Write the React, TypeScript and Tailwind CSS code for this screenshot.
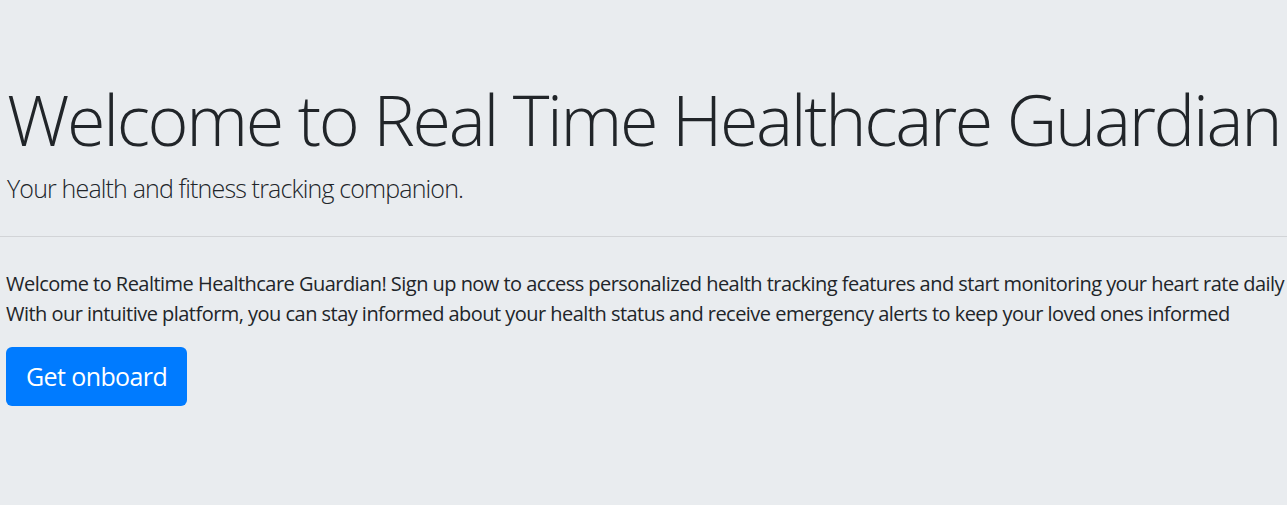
export default function App() {
  return (
    <div className="min-h-[505px] w-full bg-[#e9ecef] text-[#212529] overflow-hidden">
      <div className="pl-[7px] pt-[77px] font-['Open_Sans','Noto_Sans',sans-serif]">
        <h1 className="text-[70px] font-light leading-[84px] tracking-[-2.35px] whitespace-nowrap">Welcome to Real Time Healthcare Guardian</h1>
        <p className="mt-[9px] text-[25px] font-light leading-[37px] tracking-[-0.85px] whitespace-nowrap">Your health and fitness tracking companion.</p>
        <hr className="mt-[29px] mb-[32px] border-0 border-t border-[#d2d4d7] -ml-[7px]" />
        <p className="-ml-px text-[20px] leading-[30px] tracking-[-0.53px] whitespace-nowrap">Welcome to Realtime Healthcare Guardian! Sign up now to access personalized health tracking features and start monitoring your heart rate daily</p>
        <p className="-ml-px text-[20px] leading-[30px] tracking-[-0.53px] whitespace-nowrap">With our intuitive platform, you can stay informed about your health status and receive emergency alerts to keep your loved ones informed</p>
        <button className="mt-[18px] -ml-px bg-[#007bff] text-white text-[25px] leading-[39px] tracking-[-0.6px] px-[20px] py-[10px] rounded-[6px]">Get onboard</button>
      </div>
    </div>
  );
}
